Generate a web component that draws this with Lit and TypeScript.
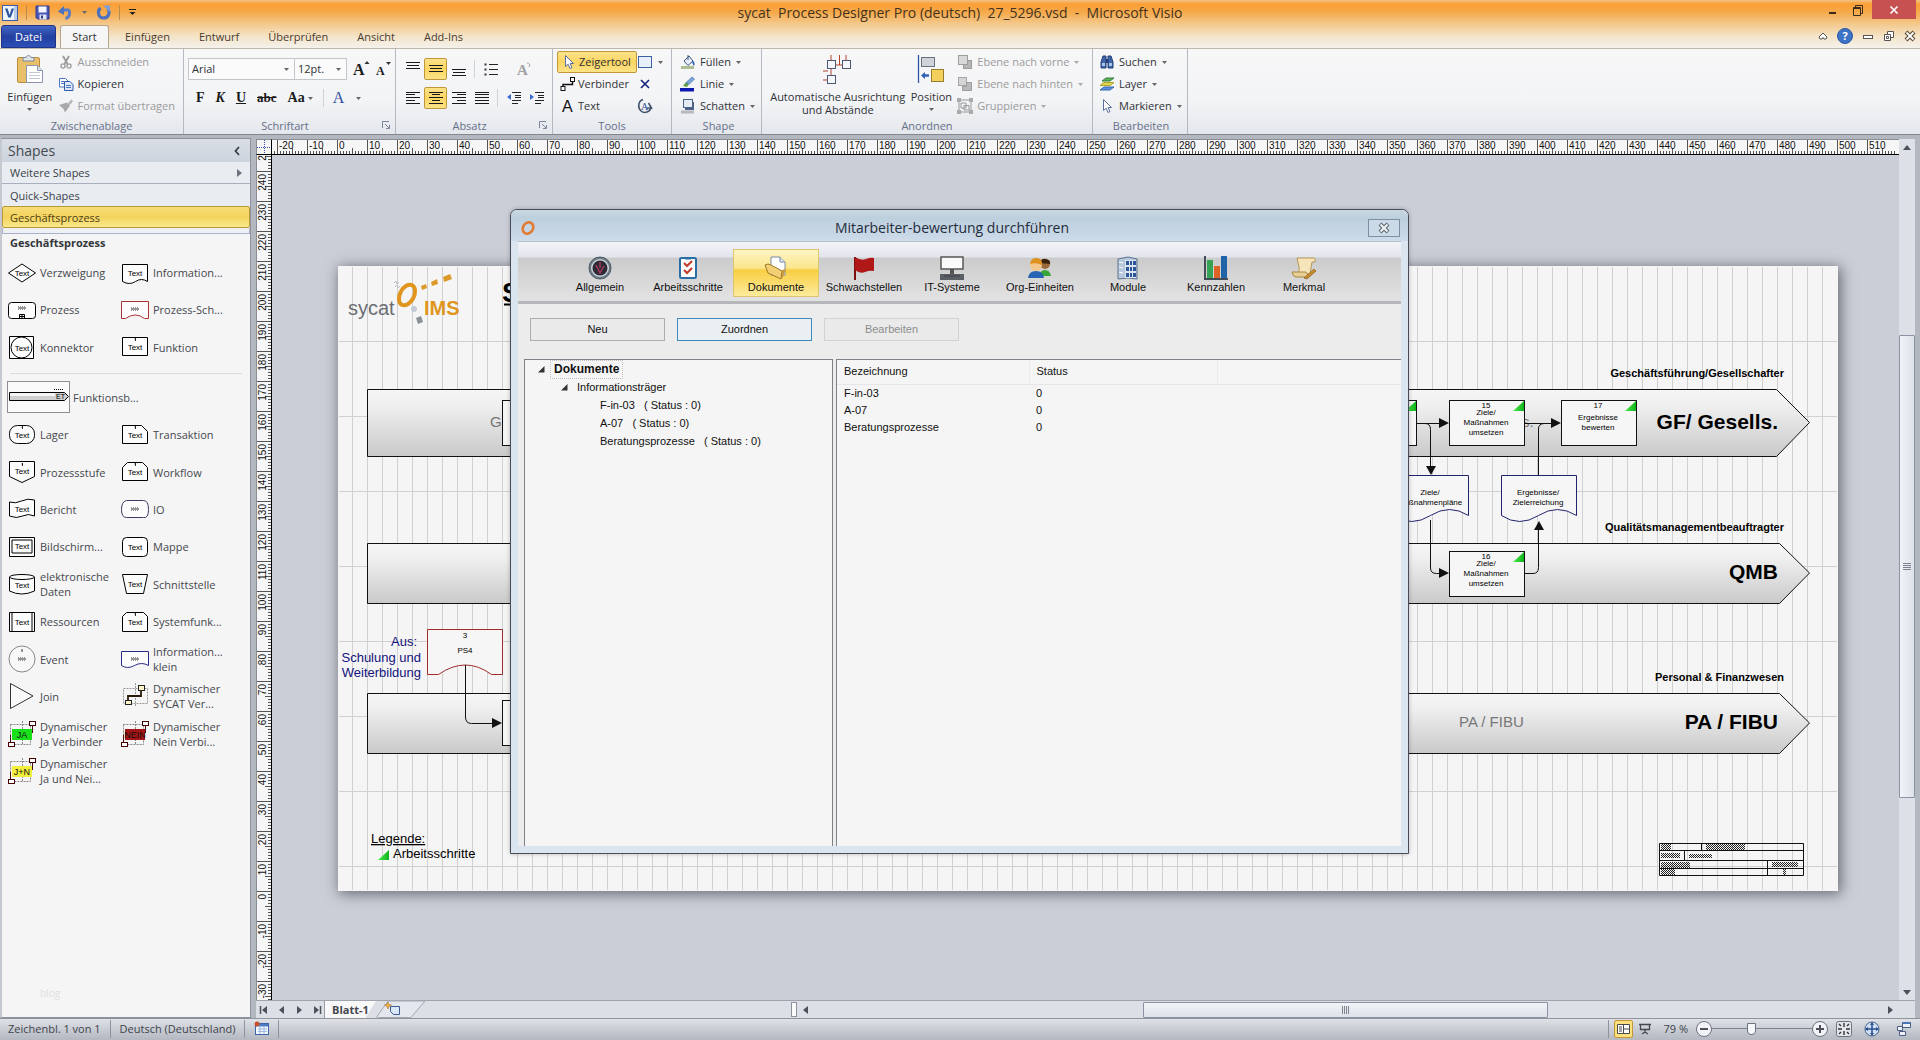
import { LitElement, html, svg, css } from "lit";
import type { TemplateResult } from "lit";
import { customElement, property } from "lit/decorators.js";
import { classMap } from "lit/directives/class-map.js";

const icon = (w: number, h: number, body: unknown) =>
  html`<svg class="ic" width=${w} height=${h} viewBox="0 0 ${w} ${h}" aria-hidden="true">${body}</svg>`;

const caret = html`<svg class="ic caret" width="7" height="5" viewBox="0 0 7 5" aria-hidden="true"><path d="M1 1h5L3.5 4z" fill="currentColor" /></svg>`;

/* ---------- ribbon icons ---------- */

const lines = (y: number[], w: number[], align: "l" | "c" | "r") =>
  svg`<path stroke="#1a1a1a" stroke-width="1" d=${y
    .map((v, i) => {
      const x = align === "l" ? 1 : align === "r" ? 15 - w[i] : 8 - w[i] / 2;
      return `M${x} ${v + 0.5}h${w[i]}`;
    })
    .join("")} />`;

const I = {
  visio: icon(16, 16, svg`<rect x=".5" y=".5" width="15" height="15" fill="#eef3fb" stroke="#3a5fa8"/><path d="M12 1h3v14h-3z" fill="#b9cbe8"/><path d="M3 3.500h2.600l2 6.500 2-6.500h2.400L8.800 12.500H6.300z" fill="#2a56a0"/>`),
  save: icon(15, 15, svg`<path d="M1 1h13v13H2.500L1 12.500z" fill="#4a56b8" stroke="#2f3b8f"/><rect x="3.500" y="1.500" width="8" height="6" fill="#f4f6ff"/><rect x="4.500" y="9.500" width="7" height="5" fill="#dfe4f6"/><rect x="6" y="10.500" width="2" height="3" fill="#2f3b8f"/>`),
  undo: icon(15, 15, svg`<path d="M3 5h7c1 0 1.500 1 1.500 3 0 3-2 5-4 5.500" fill="none" stroke="#5a7cc8" stroke-width="3"/><path d="M0 6.500 6 1v9z" fill="#4d72c0"/>`),
  redo: icon(15, 15, svg`<path d="M4.500 3c-4 3.500-2 10 3 10s7-5 4.500-9" fill="none" stroke="#4a70c0" stroke-width="3"/><path d="M7 .5h7v6.500z" fill="#7d9edc"/>`),
  qat: icon(9, 9, svg`<path d="M1 1.500h7" stroke="#222"/><path d="M1.500 4h6L4.500 7z" fill="#222"/>`),
  paste: icon(28, 30, svg`<rect x="1.500" y="3.500" width="22" height="25" rx="1.500" fill="#e9c06a" stroke="#b98d3c"/><path d="M7 7V3.500h3C10 1 15 1 15 3.500h3V7z" fill="#dfe3ea" stroke="#7f8794"/><path d="M10.500 11.500h11l5 5v12h-16z" fill="#fff" stroke="#8b95a8"/><path d="M21.500 11.500v5h5" fill="#dce3ef" stroke="#8b95a8"/><path d="M13 18.500h11M13 21.500h11M13 24.500h11" stroke="#c3cad6"/>`),
  cut: icon(16, 16, svg`<path d="M5 2l4.500 8M11 2L6.500 10" stroke="#9a9a9a" stroke-width="1.800"/><circle cx="5" cy="12" r="2" fill="none" stroke="#a5a5a5" stroke-width="1.500"/><circle cx="11" cy="12" r="2" fill="none" stroke="#a5a5a5" stroke-width="1.500"/>`),
  copy: icon(16, 16, svg`<path d="M1.500 2.500h6l2.500 2.500v6h-8.500z" fill="#fff" stroke="#4a76bd"/><path d="M6.500 5.500h5.500l3 3v6h-8.500z" fill="#dce8fa" stroke="#2f5ca8"/><path d="M8 9.500h5M8 11.500h5M3 5.500h3M3 7.500h3" stroke="#4a76bd"/>`),
  brush: icon(16, 16, svg`<path d="M10 5l3.500-3.500 1.500 1.500-3 4z" fill="#b5b5b5"/><path d="M1 7l8-2.500 3 3L7 14.500 5.500 11z" fill="#a9a9a9"/>`),
  sized: (big: boolean) => icon(18, 18, svg`<text x="1" y="15" font-family="Liberation Serif, serif" font-weight="700" font-size=${big ? 16 : 12} fill="#1a1a1a">A</text><path d=${big ? "M12.500 4h5L15 1z" : "M11 2h5l-2.500 3z"} fill="#333"/>`),
  list: icon(16, 16, svg`<path d="M6 3.500h9M6 8.500h9M6 13.500h9" stroke="#222"/><path d="M1.500 2.500h2v2h-2zM1.500 7.500h2v2h-2zM1.500 12.500h2v2h-2z" fill="#333"/>`),
  rotA: icon(16, 16, svg`<text x="1" y="14" font-family="Liberation Serif, serif" font-weight="700" font-size="15" fill="#a2a2a2">A</text><path d="M11 2q4 0 2 4" stroke="#a2a2a2" fill="none"/>`),
  outdent: icon(16, 16, svg`<path d="M6 2.500h9M9 5.500h6M9 7.500h6M6 10.500h9M6 13.500h6" stroke="#222"/><path d="M5 4v6L1 7z" fill="#3a6bd0"/>`),
  indent: icon(16, 16, svg`<path d="M6 2.500h9M9 5.500h6M9 7.500h6M6 10.500h9M6 13.500h6" stroke="#222"/><path d="M1 4v6l4-3z" fill="#3a6bd0"/>`),
  pointer: icon(16, 16, svg`<path d="M4.500 1.500v11l2.600-2.300 1.900 4.300 2-1-1.900-4h3.400z" fill="#fff" stroke="#5a6ea0"/>`),
  rect: icon(16, 16, svg`<rect x="1.500" y="2.500" width="13" height="11" fill="#e8f0fb" stroke="#3f5fa5"/>`),
  conn: icon(16, 16, svg`<path d="M3 10V8.500h9.500V6" fill="none" stroke="#111" stroke-width="1.500"/><rect x="1" y="10.500" width="4" height="4" fill="#fff" stroke="#111"/><rect x="10.500" y="1.500" width="4" height="4" fill="#fff" stroke="#111"/>`),
  cross: icon(16, 16, svg`<path d="M4 4l8 8M12 4l-8 8" stroke="#15257c" stroke-width="1.700"/>`),
  textA: icon(16, 16, svg`<text x="2" y="14" font-family="Liberation Sans, sans-serif" font-size="16" fill="#111">A</text>`),
  circA: icon(16, 16, svg`<path d="M6 1.500C1 3 .5 10 4 13s9 1 10-3.500M11.500 5l3 5-4.500 0" fill="none" stroke="#44546e" stroke-width="1.600"/><text x="4" y="12" font-family="Liberation Serif, serif" font-size="10" fill="#2d4f98">A</text>`),
  fill: icon(16, 16, svg`<path d="M4 7l5-5 4 5-5 4.500z" fill="#e7eefa" stroke="#3d547f"/><path d="M8 1v5" stroke="#3d547f"/><path d="M12 6c3 2 3 4 2 6-1-1-2-3-2-6z" fill="#2f62b5"/><rect x="1" y="12" width="13" height="3" fill="#aebd94"/>`),
  line: icon(16, 16, svg`<path d="M3 10l3-4 3 2-2 3z" fill="#5f9e4a"/><path d="M6 6.500L12 1l2.500 2L9 8.500z" fill="#7ba7dc" stroke="#41669e" stroke-width=".6"/><rect x="0" y="12" width="14" height="3.500" fill="#0a18b0"/>`),
  shadow: icon(16, 16, svg`<rect x="5" y="4" width="9" height="8" fill="#4b6188"/><rect x="3.500" y="1.500" width="9" height="8" fill="#e6ecf6" stroke="#4b6188"/><rect x="1" y="12.500" width="13" height="3" fill="#b5b8bd"/>`),
  auto: icon(32, 32, svg`<path d="M9 1v6M17.500 1v10M12 11h8M24 1v6M1 17h5M1 26h5M9 15v7" stroke="#b5432a" fill="none"/><g fill="#f3f6fb" stroke="#4d5a72"><rect x="5.500" y="6.500" width="8" height="8"/><rect x="20.500" y="6.500" width="8" height="8"/><rect x="5.500" y="21.500" width="8" height="8"/></g>`),
  pos: icon(28, 30, svg`<path d="M1.500 1v28" stroke="#2f57a5" stroke-width="1.300"/><rect x="4.500" y="3.500" width="13" height="9" fill="#cfd3da" stroke="#6a7180"/><rect x="14.500" y="15.500" width="12" height="12" fill="#f3cf5b" stroke="#9a7d2b"/><path d="M4 21.500l4-3.500v2.200h4v2.600H8V25z" fill="#2f62b5"/>`),
  front: icon(16, 16, svg`<rect x="6.500" y="6.500" width="8" height="8" fill="#b6b6b6" stroke="#9d9d9d"/><rect x="1.500" y="1.500" width="9" height="9" fill="#d9d9d9" stroke="#9d9d9d"/>`),
  back: icon(16, 16, svg`<rect x="1.500" y="1.500" width="8" height="8" fill="#d5d5d5" stroke="#a5a5a5"/><path d="M5.500 10.500h4v-4h5v8h-9z" fill="#b9b9b9" stroke="#9d9d9d"/>`),
  group: icon(16, 16, svg`<path d="M2 2h12v12H2zM4 5h5v5H4zM7 7.500h5V12H7z" fill="none" stroke="#999"/><path d="M0 0h4v4H0zM12 0h4v4h-4zM0 12h4v4H0zM12 12h4v4h-4z" fill="#aaa"/>`),
  find: icon(16, 16, svg`<path d="M2 14V8l2-6h3v12zM9 14V2h3l2 6v6z" fill="#3f65a8" stroke="#243f78"/><path d="M7 5h2v4H7z" fill="#243f78"/><path d="M3 9h3v3H3zM10 9h3v3h-3z" fill="#a9c3ea"/>`),
  layer: icon(16, 16, svg`<path d="M1 14l4-3h10l-4 3z" fill="#5d8fd6" stroke="#386bb0"/><path d="M1 9.500l4-3h10l-4 3z" fill="#e2da4c" stroke="#b0a52c"/><path d="M3 5l4-3h8l-4 3z" fill="#5eb05a" stroke="#34803a"/>`),
  launcher: icon(9, 9, svg`<path d="M.5 7V.5H7" fill="none" stroke="#7a869b"/><path d="M3 3l4 4M7.500 4v3.500H4" fill="none" stroke="#7a869b"/>`),
};

const vAlign = { top: lines([1, 4, 7], [14, 12, 14], "c"), mid: lines([4, 7, 10], [14, 12, 14], "c"), bot: lines([8, 11, 14], [14, 12, 14], "c") };
const hAlign = {
  l: lines([2, 4, 7, 10, 13], [14, 9, 14, 9, 14], "l"),
  c: lines([2, 4, 7, 10, 13], [14, 8, 14, 8, 14], "c"),
  r: lines([2, 4, 7, 10, 13], [14, 9, 14, 9, 14], "r"),
  j: lines([2, 4, 7, 10, 13], [14, 14, 14, 14, 14], "l"),
};

/* ---------- stencil shapes ---------- */

const T = (y = 15, n = false) =>
  svg`<text x="14" y=${y} text-anchor="middle" font-family="Liberation Sans, sans-serif" font-size="8" fill="#000">Text</text>${n ? svg`<path d="M14.500 4v3M13.500 5h1" stroke="#000" stroke-width=".8"/>` : ""}`;
const dots = (y = 12) => svg`<path d="M10 ${y}h8M11 ${y + 1}h7M10 ${y + 2}h8" stroke="#333" stroke-dasharray="1 1"/>`;
const box = (d: string, c = "#000") => svg`<path d=${d} fill="#fdfdfd" stroke=${c}/>`;
const dyn = (fill: string, label: string) =>
  svg`<path d="M2.500 3.500h20v20h-20zM14.500 0v24" fill="none" stroke="#888" stroke-dasharray="2 1"/><rect x="4" y="8" width="20" height="11" fill=${fill}/><path d="M2.500 22v-8M24.500 4v8" stroke="#4a1010"/><rect x=".5" y="21.500" width="6" height="4" fill="#fff" stroke="#400"/><rect x="21.500" y=".5" width="6" height="4" fill="#fff" stroke="#400"/><text x="14" y="17" text-anchor="middle" font-family="Liberation Sans, sans-serif" font-size="9" fill="#111">${label}</text>`;

type Stencil = [string, unknown];
const groupA: Stencil[] = [
  ["Verzweigung", svg`${box("M.5 13L14 4l13.500 9L14 22z")}${T(16)}`],
  ["Information...", svg`${box("M1.500 4.500h25v17q-6-4-12 0t-13 0z")}${T(16)}`],
  ["Prozess", svg`<rect x=".5" y="5.500" width="27" height="16" rx="3" fill="#fdfdfd" stroke="#000"/>${dots(10)}<path d="M11.500 17.500h5v4h-5zM14 17v4M11 19.500h5" stroke="#000" fill="none"/>`],
  ["Prozess-Sch...", svg`${box("M.5 4.500h27v17h-4q-9-7-19 0h-4z", "#a33")}${dots(11)}`],
  ["Konnektor", svg`${box("M1.500 2.500h24v22h-24z")}<circle cx="13.500" cy="13.500" r="10.500" fill="none" stroke="#000"/>${T(17)}`],
  ["Funktion", svg`${box("M1.500 3.500h25v18h-25z")}${T(16, true)}`],
];
const groupB: Stencil[] = [
  ["Lager", svg`<rect x="1.500" y="3.500" width="25" height="18" rx="8" fill="#fdfdfd" stroke="#000"/>${T(16, true)}`],
  ["Transaktion", svg`${box("M1.500 3.500h19l6 6v12h-25z")}${T(16, true)}`],
  ["Prozessstufe", svg`${box("M1.500 2.500h25v15l-12.500 6-12.500-6z")}${T(15, true)}`],
  ["Workflow", svg`${box("M1.500 21.500v-13l5-5h15l5 5v13z")}${T(16, true)}`],
  ["Bericht", svg`${box("M1.500 6q6 2 12-1t13-1v16q-6-3-12 0t-13 0z")}${T(16)}`],
  ["IO", svg`${box("M5.500 4.500h17q5 0 5 9t-5 8h-17q-5 0-5-8t5-9z", "#3c3c66")}${dots(12)}`],
  ["Bildschirm...", svg`${box("M1.500 3.500h25v19h-25zM4 6h20v13H4z")}${T(15)}`],
  ["Mappe", svg`<rect x="1.500" y="3.500" width="25" height="19" rx="4" fill="#fdfdfd" stroke="#000"/>${T(16)}`],
  ["elektronische Daten", svg`${box("M1.500 6v14q12 6 25 0V6")}<ellipse cx="14" cy="6" rx="12.500" ry="2.500" fill="#fdfdfd" stroke="#000"/>${T(17)}`],
  ["Schnittstelle", svg`${box("M1.500 3.500h25l-4 19h-17z")}${T(16)}`],
  ["Ressourcen", svg`${box("M1.500 3.500h25v19h-25zM4 3v19M24 3v19")}${T(16)}`],
  ["Systemfunk...", svg`${box("M1.500 22.500v-15l4-4h17l4 4v15z")}${T(16, true)}`],
  ["Event", svg`<circle cx="14" cy="13" r="13" fill="#f8f8f8" stroke="#888"/><path d="M14 3v3" stroke="#333"/>${dots(12)}`],
  ["Information... klein", svg`${box("M.5 5.500h27v14q-7-4-14 0t-13 0z", "#2a2a88")}${dots(12)}`],
  ["Join", svg`<path d="M2.500.5v25L25 13z" fill="#fafafa" stroke="#333"/>`],
  ["Dynamischer SYCAT Ver...", svg`<path d="M2.500 5.500h24v15h-24zM14.500 0v24" fill="none" stroke="#999" stroke-dasharray="2 1"/><path d="M7 18v-5h13V7" fill="none" stroke="#2c1a08" stroke-width="1.800"/><rect x="4.500" y="17.500" width="6" height="4" fill="#fff3c9" stroke="#222"/><rect x="17.500" y="2.500" width="6" height="5" fill="#fff3c9" stroke="#222"/>`],
  ["Dynamischer Ja Verbinder", dyn("#1ae01a", "JA")],
  ["Dynamischer Nein Verbi...", dyn("#a31515", "NEIN")],
  ["Dynamischer Ja und Nei...", dyn("#f2ee3c", "J+N")],
];

/* ---------- diagram ---------- */

const band = (top: number, bottom: number, shoulder: number) =>
  svg`<path d="M367.500 ${top}.500H${shoulder}.500L1809.500 ${(top + bottom) / 2}L${shoulder}.500 ${bottom}.500H367.500Z" fill="url(#bandFill)" stroke="#111"/>`;
const laneTitle = (y: number, t: string) => svg`<text x="1784" y=${y} text-anchor="end" font-size="11" font-weight="700">${t}</text>`;
const laneName = (y: number, t: string) => svg`<text x="1778" y=${y} text-anchor="end" font-size="21" font-weight="700">${t}</text>`;
const flag = (x: number, y: number) => svg`<path d="M${x} ${y + 10}h11v-10z" fill="url(#flagFill)"/>`;
const step = (x: number, y: number, rows: [number, string][]) => svg`
  <rect x=${x + 0.5} y=${y + 0.5} width="75" height="45" fill="#f6f6f6" stroke="#111"/>
  ${flag(x + 64, y + 1)}
  ${rows.map(([dy, t]) => svg`<text x=${x + 37} y=${y + dy} text-anchor="middle" font-size="8">${t}</text>`)}`;
const docShape = (x: number, a: string, b: string) => svg`
  <path d="M${x}.500 475.500h75v40q-19-12-38 0t-37 0z" fill="#f6f6f6" stroke="#24246e"/>
  <text x=${x + 37} y="495" text-anchor="middle" font-size="8">${a}</text>
  <text x=${x + 37} y="505" text-anchor="middle" font-size="8">${b}</text>`;
const heads = (list: [number, number, "r" | "d" | "u"][]) =>
  list.map(([x, y, d]) => svg`<path d=${d === "r" ? `M${x} ${y}l-10-5v10z` : d === "d" ? `M${x} ${y}l-5-9h10z` : `M${x} ${y}l-5 9h10z`} fill="#111"/>`);

const drawing = svg`
  <defs>
    <linearGradient id="bandFill" x1="0" y1="0" x2="0" y2="1"><stop offset="0" stop-color="#f6f6f6"/><stop offset=".25" stop-color="#efefef"/><stop offset="1" stop-color="#c9c9c9"/></linearGradient>
    <linearGradient id="flagFill" x1="0" y1="0" x2="1" y2="0"><stop offset="0" stop-color="#4bea4b"/><stop offset="1" stop-color="#12b41c"/></linearGradient>
    <pattern id="half" width="2" height="2" patternUnits="userSpaceOnUse"><rect width="1" height="1" fill="#222"/><rect x="1" y="1" width="1" height="1" fill="#222"/></pattern>
    <pattern id="grid" x="337" y="266" width="15" height="75" patternUnits="userSpaceOnUse"><path d="M.5 0v75M0 75.500h15M0 .5h15" stroke="#d0d0d0" fill="none"/></pattern>
  </defs>
  <rect x="338" y="266" width="1500" height="625" fill="#f5f5f5"/>
  <rect x="339" y="267" width="1498" height="623" fill="url(#grid)"/>
  <g>
    <text x="348" y="315" font-size="20" fill="#6c6e74">sycat</text>
    <text x="424" y="315" font-size="20" font-weight="700" fill="#e0951f">IMS</text>
    <ellipse cx="407" cy="295" rx="7" ry="11" transform="rotate(28 407 295)" fill="none" stroke="#e0951f" stroke-width="4"/>
    <path d="M421 286l5-2 1 4-5 2zM431 282l6-3 1 5-6 2zM443 277l7-3 2 5-8 3z" fill="#dd9a2a"/>
    <circle cx="414" cy="309" r="3" fill="#c3cbd8"/><path d="M416 318l5-2 2 6-5 2z" fill="#8b8f96"/>
    <path d="M394 283l2-2 1 3 2-2M395 287l2-2 1 3 2-2" fill="none" stroke="#b8bcc4"/>
  </g>
  <text x="502" y="302" font-size="27" font-weight="700">S</text><path d="M504 304.500h20" stroke="#000" stroke-width="2"/>
  ${band(389, 456, 1776)}${band(543, 603, 1779)}${band(693, 753, 1779)}
  ${laneTitle(377, "Geschäftsführung/Gesellschafter")}${laneTitle(531, "Qualitätsmanagementbeauftragter")}${laneTitle(681, "Personal & Finanzwesen")}
  ${laneName(429, "GF/ Gesells.")}${laneName(579, "QMB")}${laneName(729, "PA / FIBU")}
  <g font-size="15" fill="#777"><text x="490" y="427">G</text><text x="1522" y="427">s.</text><text x="1459" y="727">PA / FIBU</text></g>
  <g fill="none" stroke="#111">
    <path d="M1417 423.500h24M1425 423.500q5.500 0 5.500 6V467M1430.500 520v48q0 5.500 6 5.500h4M1525 573.500h8q5.500 0 5.500-6V529M1538.500 475v-46q0-5.500 6-5.500M1524 423.500h30M465.500 665v52q0 6.500 6 6.500h22"/>
  </g>
  ${step(1341, 400, [[20, ""]])}
  ${step(1449, 400, [[8, "15"], [15, "Ziele/"], [25, "Maßnahmen"], [35, "umsetzen"]])}
  ${step(1561, 400, [[8, "17"], [20, "Ergebnisse"], [30, "bewerten"]])}
  ${step(1449, 551, [[8, "16"], [15, "Ziele/"], [25, "Maßnahmen"], [35, "umsetzen"]])}
  ${docShape(1393, "Ziele/", "Maßnahmenpläne")}${docShape(1501, "Ergebnisse/", "Zielerreichung")}
  <rect x="502.500" y="400.500" width="75" height="45" fill="#f6f6f6" stroke="#111"/>
  <rect x="502.500" y="700.500" width="75" height="45" fill="#f6f6f6" stroke="#111"/>
  <path d="M427.500 629.500h75v45h-11q-26-19-53 0h-11z" fill="#f6f6f6" stroke="#a02c2c"/>
  <path d="M465.500 665v10" stroke="#111"/>
  <text x="465" y="638" text-anchor="middle" font-size="8">3</text><text x="465" y="653" text-anchor="middle" font-size="8">PS4</text>
  ${heads([[1449, 423, "r"], [1561, 423, "r"], [1449, 573, "r"], [502, 723, "r"], [1431, 475, "d"], [1539, 521, "u"]])}
  <g font-size="13" fill="#12127c" text-anchor="end"><text x="417" y="646">Aus:</text><text x="421" y="662">Schulung und</text><text x="421" y="677">Weiterbildung</text></g>
  <g font-size="13"><text x="371" y="843" text-decoration="underline">Legende:</text><text x="393" y="858">Arbeitsschritte</text></g>
  ${flag(378, 850)}
  <path d="M1659.500 843.500h144v32h-144zM1659 850.500h145M1659 860.500h145M1659 868.500h145M1701.500 844v6M1684.500 851v9M1767.500 861v15" fill="none" stroke="#111"/>
  <path d="M1661 844h10v6h-10zM1706 844h39v6h-39zM1661 853h19v5h-19zM1689 854h23v4h-23zM1661 862h29v6h-29zM1772 862h26v5h-26zM1661 869h14v6h-14zM1783 869h3v6h-3z" fill="url(#half)"/>`;

/* ---------- dialog icons ---------- */

const D: Record<string, unknown> = {
  Allgemein: svg`<circle cx="12" cy="12" r="11" fill="#6f7b87" stroke="#4e5864"/><circle cx="12" cy="12" r="9" fill="#c9d1d8"/><circle cx="12" cy="12" r="7.500" fill="#2b2a35"/><path d="M12 6v6M8 9l4 8 4-7" stroke="#a93d5a" fill="none" stroke-width="1.500"/>`,
  Arbeitsschritte: svg`<rect x="4" y="2" width="16" height="20" rx="1.500" fill="#fbfbfb" stroke="#2a6ea8" stroke-width="2"/><path d="M9 1h6v2.500H9z" fill="#2a6ea8"/><path d="M8 7l3 3 5-5M8 14l3 3 5-5" fill="none" stroke="#c03a2a" stroke-width="2"/>`,
  Dokumente: svg`<path d="M7 1h9l5 5v13H7z" fill="#fff" stroke="#7a8aa5"/><path d="M16 1v5h5" fill="#dbe4f2" stroke="#7a8aa5"/><path d="M1 9l3-1 3 1 11 6-1 8L4 17z" fill="#f3cf73" stroke="#9c7a2b"/><path d="M18 23l4-10-4 1z" fill="#c89a3c"/>`,
  Schwachstellen: svg`<path d="M3 1v23" stroke="#7c1010" stroke-width="2"/><path d="M3 1q6 4 11 2t8-1v13q-4-1-9 1T3 14z" fill="#b01717"/>`,
  "IT-Systeme": svg`<rect x="1" y="1" width="22" height="12" fill="#fafafa" stroke="#555" stroke-width="1.500"/><path d="M10 13h4v5h-4z" fill="#555"/><path d="M0 18h24v6H0z" fill="#5c6066"/><path d="M4 20h16" stroke="#3a3d42"/>`,
  "Org-Einheiten": svg`<circle cx="17" cy="8" r="5" fill="#9a6a3a"/><path d="M12 7q1-5 6-4t4 5z" fill="#3a2310"/><path d="M11 20q1-6 6-6t6 6z" fill="#37a53a"/><circle cx="8" cy="9" r="6" fill="#f3c68c"/><path d="M2 8q1-7 7-6t5 7q-6-3-12-1z" fill="#dd9222"/><path d="M0 22q1-7 8-7t8 7z" fill="#2864b4"/>`,
  Module: svg`<path d="M2 3l10-2 9 2v20l-9-1-10 1z" fill="#b8c8dc" stroke="#5c7390"/><path d="M9 4h11v18H9z" fill="#dbe5f2"/><g fill="#2e5597"><path d="M10 5h3v4h-3zM14 5h2v4h-2zM17 5h3v4h-3zM10 11h3v4h-3zM14 11h2v4h-2zM17 11h3v4h-3zM10 17h3v4h-3zM14 17h2v4h-2zM17 17h3v4h-3z"/></g><path d="M3 6l4 1M3 11l4 1M3 16l4 1" stroke="#fff"/>`,
  Kennzahlen: svg`<path d="M1 0v23h23" fill="none" stroke="#444c55" stroke-width="2"/><rect x="3" y="4" width="6" height="18" fill="#35a353"/><rect x="10" y="10" width="6" height="12" fill="#dd6327"/><rect x="17" y="0" width="6" height="22" fill="#2263a8"/>`,
  Merkmal: svg`<path d="M5 2h17q2 0 1 4h-3l-2 12H4q4-1 3-7z" fill="#f6e5bb" stroke="#b59656"/><path d="M0 16h14l3 5H4q-3 0-4-5z" fill="#e8cf93" stroke="#a88645"/><path d="M12 22l10-9 2 2-9 8z" fill="#c98b2e" stroke="#7c5318" stroke-width=".6"/>`,
};

/* ---------- rulers ---------- */

function tickPath(from: number, to: number, at: (v: number) => number, horizontal: boolean) {
  let d = "";
  for (let v = from; v <= to; v++) {
    const start = v % 10 === 0 ? 0 : v % 5 === 0 ? 8 : 11;
    const p = at(v) + 0.5;
    d += horizontal ? `M${p} ${start}V15` : `M${start} ${p}H15`;
  }
  return d;
}
const tens = (from: number, to: number) => Array.from({ length: (to - from) / 10 + 1 }, (_, i) => from + i * 10);

@customElement("ruler-strip")
class RulerStrip extends LitElement {
  @property({ type: Boolean }) vertical = false;
  static styles = css`
    :host { display: block; overflow: hidden; background: #f6f6f6; min-width: 0; min-height: 0; }
    :host([vertical]) { border-right: 1px solid #000; border-left: 1px solid #8a8d96; contain: size; }
    :host(:not([vertical])) { border-bottom: 1px solid #000; border-top: 1px solid #8a8d96; contain: size; }
    svg { display: block; width: 100%; height: 100%; }
    text { font: 10px "Liberation Sans", Arial, sans-serif; fill: #111; }
  `;
  render() {
    return this.vertical
      ? html`<svg aria-hidden="true"><path d=${tickPath(-40, 255, (v) => 736 - 3 * v, false)} stroke="#555" />
          ${tens(-30, 250).map((v) => svg`<text transform="translate(9 ${739 - 3 * v}) rotate(-90)" text-anchor="end">${v}</text>`)}</svg>`
      : html`<svg aria-hidden="true"><path d=${tickPath(-21, 519, (v) => 65 + 3 * v, true)} stroke="#555" />
          ${tens(-20, 510).map((v) => svg`<text x=${67 + 3 * v} y="9">${v}</text>`)}</svg>`;
  }
}

const uiBase = css`
  * { box-sizing: border-box; }
  button, select, input { font: inherit; color: inherit; margin: 0; }
  button { border: 0; background: none; padding: 0; display: inline-flex; align-items: center; white-space: nowrap; }
  .ic { display: block; flex: none; overflow: visible; }
`;

@customElement("office-ribbon")
class OfficeRibbon extends LitElement {
  static styles = [uiBase, css`
    :host { display: block; font: 11px/16px "Open Sans", "Noto Sans", sans-serif; color: #2f3237; }
    .top { background: linear-gradient(#f3c489 0, #fb9f36 4px, #f6a94a 12px, #f3c98c 24px, #f4e3c6 36px, #f4f2ec 48px); }
    .title { display: grid; grid-template-columns: 1fr auto 1fr; height: 25px; align-items: center; }
    .qat { display: flex; align-items: center; gap: 8px; padding: 0 2px; color: #222; }
    .qat .bar { width: 1px; height: 15px; background: #b98c50; }
    .title h1 { margin: 0; font: 14px/25px "Open Sans", "Noto Sans", sans-serif; white-space: pre; color: #43321f; }
    .win { display: flex; justify-content: flex-end; align-items: flex-start; align-self: start; padding-right: 4px; }
    .win button { height: 19px; width: 25px; justify-content: center; }
    .win .close { width: 44px; margin-left: 2px; background: #c75050; }
    .tabs { display: flex; height: 23px; align-items: flex-end; padding-left: 1px; color: #4a3c30; }
    .tab { height: 22px; padding: 0 14px; margin-right: 1px; justify-content: center; }
    .tabs .file { width: 55px; justify-content: center; margin-right: 4px; height: 23px; color: #fff; background: linear-gradient(#4166c6, #2440a0 50%, #2b4fb8); border: 1px solid #1f3488; border-radius: 3px 3px 0 0; }
    .tabs .on { width: 49px; justify-content: center; margin-right: 2px; height: 23px; background: #f6f6f6; border: 1px solid #b5a58c; border-bottom: 0; border-radius: 3px 3px 0 0; color: #333; }
    .mdi { margin-left: auto; display: flex; align-items: center; gap: 9px; padding: 0 4px 4px 0; }
    .body { display: flex; height: 87px; background: linear-gradient(#f7f7f8, #f3f4f6 60%, #e4e7ec); border-top: 1px solid #bdb7ab; border-bottom: 1px solid #84878e; }
    .group { display: flex; flex-direction: column; border-right: 1px solid #b5bac2; padding: 2px 4px 0; flex: none; }
    .rows { display: flex; height: 66px; }
    .col { display: flex; flex-direction: column; }
    .cap { display: flex; align-items: center; justify-content: center; height: 17px; color: #66708a; }
    .cap span { flex: 1; text-align: center; }
    .col button { height: 22px; gap: 4px; padding-right: 4px; }
    .dim { color: #9b9b9b; }
    .big { flex-direction: column; justify-content: flex-start; line-height: 13px; white-space: normal; }
    .big .ic:first-child { margin: 3px 0 6px; }
    .big .caret { margin-top: 4px; }
    .bauto .ic:first-child { margin: 3px 0 4px; }
    .caret { color: #666; }
    .dim .caret { color: #aaa; }
    .g1 { width: 184px; } .g2 { width: 212px; } .g3 { width: 157px; } .g4 { width: 119px; } .g5 { width: 90px; padding-left: 8px; } .g6 { width: 331px; } .g7 { width: 95px; padding-left: 6px; }
    .bp { width: 52px; margin-right: 2px; } .bauto { width: 144px; } .bpos { width: 44px; margin-right: 4px; }
    .line { display: flex; align-items: center; height: 22px; gap: 5px; }
    .g2 .stack, .g3 .stack { display: flex; flex-direction: column; padding-top: 7px; gap: 7px; }
    .combo { display: grid; align-items: center; border: 1px solid #c3c6cb; background: #fbfbfb; height: 22px; margin-right: -6px; }
    .combo select { grid-area: 1 / 1; appearance: none; border: 0; background: none; height: 20px; padding: 0 3px; width: 100%; }
    .combo .caret { grid-area: 1 / 1; justify-self: end; margin-right: 4px; pointer-events: none; }
    .font { width: 107px; } .size { width: 53px; margin-right: 0; }
    .serif { font: 700 14px/20px "Liberation Serif", serif; color: #1a1a1a; }
    .sm { font-size: 13px; }
    .i { font-style: italic; } .u { text-decoration: underline; } .s { text-decoration: line-through; }
    .blue { color: #2e4f9d; font-weight: 400; font-size: 16px; }
    .chars { gap: 11px; padding-left: 8px; } .chars .serif { height: 22px; gap: 2px; }
    .vbar { width: 1px; height: 18px; background: #cfd2d7; }
    .chars .vbar { margin: 0 -2px; }
    .sq { width: 23px; height: 22px; justify-content: center; border: 1px solid transparent; border-radius: 2px; }
    .sq.on, .pt { background: linear-gradient(#fbe28a, #fbd561 50%, #fce488); border: 1px solid #c2973a; border-radius: 2px; }
    .aligns { gap: 0; padding-left: 1px; } .aligns .vbar { margin: 0 4px; } .aligns .gap { width: 10px; }
    .col .pt { width: 80px; padding-left: 3px; gap: 2px; }
    .g4 .a { width: 83px; } .g4 .a button { padding-left: 3px; gap: 2px; }
  `];
  private small(ic: unknown, label: string, opts: { dim?: boolean; dd?: boolean; cls?: string } = {}) {
    return html`<button class=${classMap({ dim: !!opts.dim, [opts.cls ?? "plain"]: true })} ?disabled=${!!opts.dim}>${ic}${label}${opts.dd ? caret : ""}</button>`;
  }
  private cap(label: string, launch = false) {
    return html`<div class="cap"><span>${label}</span>${launch ? html`<button aria-label=${label + " Optionen"}>${I.launcher}</button>` : ""}</div>`;
  }
  private sq(body: TemplateResult | unknown, label: string, on = false) {
    return html`<button class=${classMap({ sq: true, on })} aria-label=${label}>${body}</button>`;
  }
  render() {
    return html`
      <header class="top">
        <div class="title">
          <div class="qat">${I.visio}<span class="bar"></span>
            <button aria-label="Speichern">${I.save}</button><button aria-label="Rückgängig">${I.undo}</button>${caret}
            <button aria-label="Wiederholen">${I.redo}</button><span class="bar"></span><button aria-label="Anpassen">${I.qat}</button></div>
          <h1>sycat  Process Designer Pro (deutsch)  27_5296.vsd  -  Microsoft Visio</h1>
          <div class="win">
            <button aria-label="Minimieren">${icon(10, 10, svg`<path d="M1 8h7" stroke="#3a2c1c" stroke-width="2"/>`)}</button>
            <button aria-label="Wiederherstellen">${icon(12, 12, svg`<path d="M3.500 3V1.500h7v8H9M1.500 3.500h7v8h-7zM1 4.500h8" fill="none" stroke="#3a2c1c"/>`)}</button>
            <button class="close" aria-label="Schließen">${icon(10, 10, svg`<path d="M1.500 1.500l7 7M8.500 1.500l-7 7" stroke="#fff" stroke-width="1.700"/>`)}</button>
          </div>
        </div>
        <nav class="tabs">
          <button class="file">Datei</button><button class="on">Start</button>
          ${["Einfügen", "Entwurf", "Überprüfen", "Ansicht", "Add-Ins"].map((t) => html`<button class="tab">${t}</button>`)}
          <div class="mdi">
            <button aria-label="Menüband minimieren">${icon(10, 8, svg`<path d="M1 5l4-4 4 4-1 2H6L5 5.500 4 7H2z" fill="#fff" stroke="#555"/>`)}</button>
            <button aria-label="Hilfe">${icon(16, 16, svg`<circle cx="8" cy="8" r="7.500" fill="#3d73c6" stroke="#2a58a4"/><text x="8" y="12" text-anchor="middle" font-size="11" font-weight="700" fill="#fff">?</text>`)}</button>
            <button aria-label="Fenster minimieren">${icon(12, 8, svg`<rect x="1.500" y="3.500" width="9" height="3" fill="#fff" stroke="#555"/>`)}</button>
            <button aria-label="Fenster wiederherstellen">${icon(12, 12, svg`<path d="M4.500 4V1.500h6v6H8M1.500 4.500h6v6h-6zM3.500 6.500h2v2h-2z" fill="#fff" stroke="#555"/>`)}</button>
            <button aria-label="Fenster schließen">${icon(12, 12, svg`<path d="M2 2l8 8M10 2l-8 8" stroke="#5a4a35" stroke-width="4"/><path d="M2.500 2.500l7 7M9.500 2.500l-7 7" stroke="#fff" stroke-width="1.800"/>`)}</button>
          </div>
        </nav>
      </header>
      <div class="body">
        <section class="group g1"><div class="rows">
          <button class="big bp">${I.paste}Einfügen${caret}</button>
          <div class="col">${this.small(I.cut, "Ausschneiden", { dim: true })}${this.small(I.copy, "Kopieren")}${this.small(I.brush, "Format übertragen", { dim: true })}</div>
        </div>${this.cap("Zwischenablage")}</section>
        <section class="group g2"><div class="rows"><div class="stack">
          <div class="line">
            <label class="combo font"><select aria-label="Schriftart"><option>Arial</option></select>${caret}</label>
            <label class="combo size"><select aria-label="Schriftgrad"><option>12pt.</option></select>${caret}</label>
            <button aria-label="Schrift vergrößern">${I.sized(true)}</button><button aria-label="Schrift verkleinern">${I.sized(false)}</button>
          </div>
          <div class="line chars">
            <button class="serif">F</button><button class="serif i">K</button><button class="serif u">U</button><button class="serif sm s">abc</button>
            <button class="serif">Aa${caret}</button><span class="vbar"></span><button class="serif blue">A</button>${caret}
          </div>
        </div></div>${this.cap("Schriftart", true)}</section>
        <section class="group g3"><div class="rows"><div class="stack">
          <div class="line aligns">${this.sq(icon(16, 16, vAlign.top), "Oben")}${this.sq(icon(16, 16, vAlign.mid), "Mitte", true)}${this.sq(icon(16, 16, vAlign.bot), "Unten")}<span class="vbar"></span>${this.sq(I.list, "Aufzählung")}<span class="gap"></span>${this.sq(I.rotA, "Drehen")}</div>
          <div class="line aligns">${this.sq(icon(16, 16, hAlign.l), "Links")}${this.sq(icon(16, 16, hAlign.c), "Zentriert", true)}${this.sq(icon(16, 16, hAlign.r), "Rechts")}${this.sq(icon(16, 16, hAlign.j), "Block")}<span class="vbar"></span>${this.sq(I.outdent, "Ausrücken")}${this.sq(I.indent, "Einrücken")}</div>
        </div></div>${this.cap("Absatz", true)}</section>
        <section class="group g4"><div class="rows">
          <div class="col a">${this.small(I.pointer, "Zeigertool", { cls: "pt" })}${this.small(I.conn, "Verbinder")}${this.small(I.textA, "Text")}</div>
          <div class="col"><button aria-label="Rechteck">${I.rect}${caret}</button><button aria-label="Verbindungspunkt">${I.cross}</button><button aria-label="Textblock">${I.circA}</button></div>
        </div>${this.cap("Tools")}</section>
        <section class="group g5"><div class="rows"><div class="col">${this.small(I.fill, "Füllen", { dd: true })}${this.small(I.line, "Linie", { dd: true })}${this.small(I.shadow, "Schatten", { dd: true })}</div></div>${this.cap("Shape")}</section>
        <section class="group g6"><div class="rows">
          <button class="big bauto">${I.auto}Automatische Ausrichtung und Abstände</button>
          <button class="big bpos">${I.pos}Position${caret}</button>
          <div class="col">${this.small(I.front, "Ebene nach vorne", { dim: true, dd: true })}${this.small(I.back, "Ebene nach hinten", { dim: true, dd: true })}${this.small(I.group, "Gruppieren", { dim: true, dd: true })}</div>
        </div>${this.cap("Anordnen")}</section>
        <section class="group g7"><div class="rows"><div class="col">${this.small(I.find, "Suchen", { dd: true })}${this.small(I.layer, "Layer", { dd: true })}${this.small(I.pointer, "Markieren", { dd: true })}</div></div>${this.cap("Bearbeiten")}</section>
      </div>`;
  }
}

@customElement("shapes-panel")
class ShapesPanel extends LitElement {
  static styles = [uiBase, css`
    :host { display: flex; flex-direction: column; font: 11px/15px "Open Sans", "Noto Sans", sans-serif; color: #45484e; background: #f5f5f5; border: 1px solid #8f929a; border-left: 2px solid #c6c9d0; }
    h2 { margin: 0; display: flex; justify-content: space-between; align-items: center; height: 23px; padding: 0 10px 0 6px; font-size: 14px; font-weight: 400; background: linear-gradient(#d9dee6, #cdd4de); }
    .row { display: flex; justify-content: space-between; width: 100%; height: 22px; padding: 0 8px; background: #e9edf2; color: #3a3f48; }
    .more { border-bottom: 1px solid #a9b0bd; }
    .sel { border: 1px solid #b99638; border-radius: 2px; background: linear-gradient(#f7dd77, #f4d35e 50%, #fae98c); padding: 0 7px; color: #4c4014; }
    .band { height: 6px; border: 1px solid #a9b0cf; border-top: 0; background: #eef0f4; }
    h3 { margin: 0; padding: 0 8px; font-size: 11px; line-height: 17px; color: #33363b; }
    .set { display: grid; grid-template-columns: 113px 1fr; grid-auto-rows: 1fr; padding-left: 6px; }
    .first { min-height: 112px; margin-top: 3px; } .rest { min-height: 374px; }
    .item { display: grid; grid-template-columns: 28px 1fr; gap: 4px; align-items: center; text-align: left; white-space: normal; }
    .item span { max-width: 74px; }
    hr { margin: 7px 8px; border: 0; border-top: 1px solid #dadce0; height: 0; width: 232px; }
    .wide { margin-left: 5px; gap: 3px; height: 32px; align-self: flex-start; margin-bottom: 3px; }
    .mark { margin-top: auto; padding: 0 0 16px 38px; color: #dfdfdf; font-size: 10px; }
  `];
  private item([label, body]: Stencil) {
    return html`<button class="item">${icon(28, 26, body)}<span>${label}</span></button>`;
  }
  render() {
    return html`
      <h2>Shapes<button aria-label="Fenster Shapes minimieren">${icon(6, 8, svg`<path d="M5 0L1.500 4 5 8" fill="none" stroke="#3a3f48" stroke-width="1.800"/>`)}</button></h2>
      <button class="row more">Weitere Shapes${icon(6, 10, svg`<path d="M1 1v8l5-4z" fill="#6c717b"/>`)}</button>
      <button class="row">Quick-Shapes</button>
      <button class="row sel">Geschäftsprozess</button>
      <div class="band"></div>
      <h3>Geschäftsprozess</h3>
      <div class="set first">${groupA.map((g) => this.item(g))}</div>
      <hr />
      <button class="wide">${icon(63, 32, svg`<rect x=".5" y=".5" width="62" height="31" fill="#fafafa" stroke="#8e8e8e"/><path d="M2.500 11.500h55l4 4-4 4h-55z" fill="#cfcfcf" stroke="#000"/><path d="M3 13.500h45" stroke="#f4f4f4" stroke-width="3"/><path d="M47 8.500h10" stroke="#000" stroke-dasharray="1 1"/><text x="49" y="18" font-family="Liberation Sans, sans-serif" font-size="7">ET</text>`)}<span>Funktionsb...</span></button>
      <div class="set rest">${groupB.map((g) => this.item(g))}</div>
      <div class="mark">blog</div>`;
  }
}

@customElement("rating-dialog")
class RatingDialog extends LitElement {
  static styles = [uiBase, css`
    :host { display: flex; flex-direction: column; font: 11px/17px "Liberation Sans", Arial, sans-serif; color: #111; background: #dae5f0; border: 1px solid #484c58; border-radius: 7px 7px 0 0; padding: 0 7px 7px; box-sizing: border-box; }
    .bar { display: grid; grid-template-columns: 16px 1fr 32px; align-items: center; height: 31px; margin: 0 -7px; padding: 4px 8px 0 9px; border-radius: 6px 6px 0 0; background: linear-gradient(#c9d8e3 0, #bccfdc 8px, #c3d3e2 16px, #cddbea 31px); }
    h2 { margin: 0; font: 14px/20px "Open Sans", "Noto Sans", sans-serif; text-align: center; color: #1f2c3a; }
    .close { width: 32px; height: 18px; justify-content: center; border: 1px solid #7d8fa5; background: #ccdae8; }
    .tools { display: flex; gap: 2px; height: 63px; padding: 7px 0 0 39px; border-bottom: 3px solid #b5b7ba; border-top: 1px solid #b4bfcc; background: linear-gradient(#f2f4f8 0, #e2e5ec 15px, #cbcbcb 16px, #e3e3e3 100%); }
    .tools button { width: 86px; height: 48px; flex-direction: column; justify-content: flex-start; padding-top: 6px; line-height: 14px; border: 1px solid transparent; }
    .tools .on { border-color: #dcc56c; background: linear-gradient(#fdf5c4 0, #fbe68d 18px, #f8ce42 20px, #fdeb9d 100%); }
    .acts { display: flex; gap: 12px; padding: 14px 12px 18px; background: #ececec; }
    .acts button { width: 135px; height: 23px; justify-content: center; border: 1px solid #acacac; background: #eaeaea; }
    .acts .focus { border-color: #3c8ac0; background: #e9eff3; }
    .acts button:disabled { border-color: #d2d2d2; color: #8d8d8d; }
    .split { display: grid; grid-template-columns: 309px 1fr; gap: 3px; flex: 1; min-height: 0; padding-left: 6px; background: #ececec; }
    .pane { background: #f5f5f5; border: 1px solid #7f8288; border-bottom: 0; }
    .list { border-right: 0; }
    ul { list-style: none; margin: 0; padding: 0 0 0 23px; }
    .root { padding: 0 0 0 13px; }
    li > div { display: flex; align-items: center; height: 18px; white-space: pre; }
    .tw { width: 12px; }
    .leaf { padding-left: 16px; }
    .node { padding: 0 4px; }
    .strong { font-weight: 700; font-size: 12px; border: 1px dotted #c0c0c0; padding: 0 3px; }
    table { border-collapse: collapse; width: 100%; table-layout: fixed; }
    th, td { text-align: left; font-weight: 400; padding: 0 7px; height: 17px; line-height: 17px; }
    th { height: 24px; border-right: 1px solid #ebebeb; border-bottom: 1px solid #e6e6e6; }
    th:last-child { border-right: 0; }
    .c1 { width: 192px; } .c2 { width: 188px; }
  `];
  private twist = html`<span class="tw">${icon(7, 7, svg`<path d="M6.500 0v6.500H0z" fill="#333"/>`)}</span>`;
  render() {
    const leaves = ["F-in-03   ( Status : 0)", "A-07   ( Status : 0)", "Beratungsprozesse   ( Status : 0)"];
    return html`
      <div class="bar">${icon(16, 16, svg`<ellipse cx="8" cy="8" rx="5" ry="6" transform="rotate(35 8 8)" fill="none" stroke="#e27a33" stroke-width="2.600"/>`)}
        <h2>Mitarbeiter-bewertung durchführen</h2>
        <button class="close" aria-label="Schließen">${icon(12, 10, svg`<path d="M2 1l8 8M10 1l-8 8" stroke="#59626e" stroke-width="4"/><path d="M2.500 1.500l7 7M9.500 1.500l-7 7" stroke="#f4f7fa" stroke-width="2"/>`)}</button></div>
      <nav class="tools">${Object.entries(D).map(([k, v]) => html`<button class=${classMap({ on: k === "Dokumente" })}>${icon(24, 24, v)}${k}</button>`)}</nav>
      <div class="acts"><button>Neu</button><button class="focus">Zuordnen</button><button disabled>Bearbeiten</button></div>
      <div class="split">
        <div class="pane"><ul class="root" role="tree"><li role="treeitem" aria-expanded="true"><div>${this.twist}<span class="node strong">Dokumente</span></div>
          <ul role="group"><li role="treeitem" aria-expanded="true"><div>${this.twist}<span class="node">Informationsträger</span></div>
            <ul role="group">${leaves.map((l) => html`<li role="treeitem"><div class="leaf">${l}</div></li>`)}</ul></li></ul></li></ul></div>
        <div class="pane list"><table>
          <thead><tr><th class="c1">Bezeichnung</th><th class="c2">Status</th><th></th></tr></thead>
          <tbody>${["F-in-03", "A-07", "Beratungsprozesse"].map((n) => html`<tr><td>${n}</td><td>0</td><td></td></tr>`)}</tbody>
        </table></div>
      </div>`;
  }
}

@customElement("app-root")
class AppRoot extends LitElement {
  static styles = [uiBase, css`
    :host { display: grid; grid-template-rows: auto 1fr 22px; height: 100vh; font: 11px/16px "Open Sans", "Noto Sans", sans-serif; color: #44474d; background: #b3b7c0; overflow: hidden; }
    .main { display: grid; grid-template-columns: 251px 1fr; gap: 5px; min-height: 0; padding: 3px 5px 0 0; border-left: 0; }
    .work { display: grid; grid-template-columns: 16px 1fr 16px; grid-template-rows: 16px 1fr 18px; min-width: 0; min-height: 0; margin-top: 1px; }
    .corner { background: #f6f6f6; border: 1px solid #8a8d96; border-right-color: #000; border-bottom-color: #000; }
    .corner svg { display: block; }
    .top { grid-column: 2; }
    .canvas { position: relative; overflow: hidden; background: #cbced7; min-width: 0; min-height: 0; }
    .page { position: absolute; left: 66px; top: 111px; width: 1500px; height: 625px; box-shadow: 2px 2px 13px 1px rgba(40, 42, 50, .6); display: block; }
    .page text { font-family: "Liberation Sans", Arial, sans-serif; }
    .dlg { position: absolute; left: 238px; top: 54px; width: 899px; height: 645px; box-shadow: 0 0 4px rgba(0, 0, 0, .25); }
    .vs { grid-column: 3; grid-row: 1 / 3; display: flex; flex-direction: column; background: #dde0e7; }
    .arrow { flex: none; width: 16px; height: 17px; justify-content: center; color: #555a66; }
    .thumb { display: flex; align-items: center; justify-content: center; border: 1px solid #8a92a3; border-radius: 1px; background: linear-gradient(90deg, #f1f3f7, #dde2ea); }
    .vs .s1 { flex: 180; } .vs .thumb { flex: 462; } .vs .s2 { flex: 186; }
    .foot { grid-column: 1 / 4; display: flex; background: #dcdfe6; border-top: 1px solid #9fa3ad; min-width: 0; }
    .foot .arrow { width: 17px; }
    .sheet { width: 52px; padding-left: 7px; background: #f8f8f8; border-left: 1px solid #9a9ea8; font-weight: 700; clip-path: polygon(0 0, 100% 0, 80% 100%, 0 100%); color: #44474d; }
    .hs { flex: 1; display: flex; align-items: center; }
    .hs .track { flex: 1; display: flex; height: 16px; }
    .hs .t1 { flex: 330; } .hs .thumb { flex: 405; background: linear-gradient(#f1f3f7, #dde2ea); } .hs .t2 { flex: 334; }
    .tabs { display: flex; width: 535px; align-items: stretch; }
    .grip { width: 6px; height: 15px; border: 1px solid #8e929c; background: #fafafa; }
    .status { display: flex; align-items: center; background: linear-gradient(#dfe2e7, #c3c7cf 60%, #b4b8c1); border-top: 1px solid #8f939c; padding: 0 8px 2px; color: #41444b; }
    .status > span { white-space: nowrap; }
    .vb { width: 1px; height: 18px; background: #8f939c; margin: 0 9px; }
    .spacer { flex: 1; }
    .view { width: 19px; height: 18px; justify-content: center; background: #fbe07c; border: 1px solid #c2973a; border-radius: 2px; }
    .pct { margin: 0 12px 0 6px; }
    .right { display: flex; align-items: center; }
    .right .vb { margin: 0 5px 0 0; }
    .minus { margin-left: 8px; } .fit { margin: 0 12px 0 8px; } .swap { margin-left: 16px; }
    .zoom { appearance: none; width: 100px; height: 14px; background: linear-gradient(#7d828e, #7d828e) center / 100% 1px no-repeat; }
    .zoom::-webkit-slider-thumb { appearance: none; width: 9px; height: 12px; border: 1px solid #6c7280; background: #f6f7f9; border-radius: 1px 1px 5px 5px; }
  `];
  private tri(dir: "l" | "r" | "u" | "d", bar = false) {
    const d = { l: "M7 1v8L2 5z", r: "M3 1v8l5-4z", u: "M1 7h8L5 2z", d: "M1 3h8L5 8z" }[dir];
    return icon(10, 10, svg`<path d=${d} fill="#4c505b"/>${bar ? svg`<path d=${dir === "l" ? "M.5 1v8" : "M9.500 1v8"} stroke="#4c505b" stroke-width="1.500"/>` : ""}`);
  }
  render() {
    const round = (d: string) => icon(16, 16, svg`<circle cx="8" cy="8" r="7.500" fill="#f1f3f6" stroke="#6c7280"/><path d=${d} stroke="#4c505b" stroke-width="2"/>`);
    return html`
      <office-ribbon></office-ribbon>
      <div class="main">
        <shapes-panel></shapes-panel>
        <div class="work">
          <div class="corner"><svg width="14" height="14" aria-hidden="true"><path d="M7.500 0v14M0 7.500h14" stroke="#3c4fae" stroke-dasharray="1 1"/></svg></div>
          <ruler-strip class="top"></ruler-strip>
          <div class="vs">
            <button class="arrow" aria-label="Nach oben">${this.tri("u")}</button><span class="s1"></span>
            <div class="thumb">${icon(8, 9, svg`<path d="M0 1.500h8M0 3.500h8M0 5.500h8M0 7.500h8" stroke="#7d828e"/>`)}</div><span class="s2"></span>
            <button class="arrow" aria-label="Nach unten">${this.tri("d")}</button>
          </div>
          <ruler-strip vertical></ruler-strip>
          <div class="canvas">
            <svg class="page" viewBox="338 266 1500 625">${drawing}</svg>
            <rating-dialog class="dlg" role="dialog" aria-label="Mitarbeiter-bewertung durchführen"></rating-dialog>
          </div>
          <div class="foot">
            <div class="tabs">
              <button class="arrow" aria-label="Erstes Blatt">${this.tri("l", true)}</button><button class="arrow" aria-label="Vorheriges Blatt">${this.tri("l")}</button>
              <button class="arrow" aria-label="Nächstes Blatt">${this.tri("r")}</button><button class="arrow" aria-label="Letztes Blatt">${this.tri("r", true)}</button>
              <button class="sheet">Blatt-1</button>
              <button aria-label="Neues Blatt">${icon(50, 17, svg`<path d="M0 17L12 0h37L35 16.500H2" fill="#e4e7ed" stroke="#a3a8b4"/><path d="M14.500 5.500h9v8h-6l-3-3z" fill="#dbe8fa" stroke="#3d5a94"/><path d="M12 1l1 2.500L15.500 4 13 5.500 12 8l-1-2.500L8.500 4 11 3.500z" fill="#f2b33c" stroke="#a8762a" stroke-width=".6"/>`)}</button>
            </div>
            <div class="hs">
              <span class="grip"></span><button class="arrow" aria-label="Nach links">${this.tri("l")}</button>
              <div class="track"><span class="t1"></span><div class="thumb">${icon(9, 8, svg`<path d="M1.500 0v8M3.500 0v8M5.500 0v8M7.500 0v8" stroke="#7d828e"/>`)}</div><span class="t2"></span></div>
              <button class="arrow" aria-label="Nach rechts">${this.tri("r")}</button><span class="arrow"></span>
            </div>
          </div>
        </div>
      </div>
      <footer class="status">
        <span>Zeichenbl. 1 von 1</span><i class="vb"></i><span>Deutsch (Deutschland)</span><i class="vb"></i>
        <button aria-label="Makroaufzeichnung">${icon(15, 15, svg`<rect x="1.500" y="2.500" width="13" height="11" fill="#f4f8ff" stroke="#3f65a8"/><path d="M2 3h12v2.500H2z" fill="#4d7cc6"/><path d="M4 8h9M4 10.500h9M6 6v7M10 6v7" stroke="#9db8e2"/><circle cx="3" cy="3" r="2.500" fill="#c6502c"/>`)}</button><i class="vb"></i>
        <span class="spacer"></span>
        <div class="right">
          <i class="vb"></i>
          <button class="view" aria-label="Normalansicht">${icon(13, 12, svg`<path d="M.5 1.500h12v9H.5zM6.500 1v9M7 6h5M2 4h3M2 6h3M2 8h3" fill="#fff" stroke="#4a4a4a"/>`)}</button>
          <button class="pct" aria-label="Vollbild">${icon(12, 12, svg`<path d="M0 1.500h12M1.500 2v4.500h9V2M6 7v3M3 11l3-2 3 2" fill="none" stroke="#44474d" stroke-width="1.300"/>`)}</button>
          <button>79 %</button>
          <button class="minus" aria-label="Verkleinern">${round("M4 8h8")}</button>
          <input class="zoom" type="range" min="0" max="100" value="38" aria-label="Zoom" />
          <button aria-label="Vergrößern">${round("M4 8h8M8 4v8")}</button>
          <button class="fit" aria-label="Seite anpassen">${icon(16, 16, svg`<rect x=".5" y=".5" width="15" height="15" rx="2" fill="#e3e5e9" stroke="#6c7280"/><path d="M8 2v4M8 10v4M2 8h4M10 8h4M3 3l2 2M13 3l-2 2M3 13l2-2M13 13l-2-2" stroke="#33363c" stroke-width="1.400"/>`)}</button>
          <button aria-label="Verschieben">${icon(16, 16, svg`<circle cx="8" cy="8" r="7" fill="#cfe0f5" stroke="#4a5f86"/><path d="M8 2v12M2 8h12" stroke="#2b4f8f" stroke-width="1.500"/><path d="M8 1l-2 3h4zM8 15l-2-3h4zM1 8l3-2v4zM15 8l-3-2v4z" fill="#2b4f8f"/>`)}</button>
          <button class="swap" aria-label="Fenster wechseln">${icon(16, 16, svg`<path d="M6.500 1.500h8v5h-8zM1.500 5.500h5v4h-5zM3.500 10.500h6v4h-6z" fill="#eef2f8" stroke="#4a5f86"/><path d="M7 2h7" stroke="#4a76bd" stroke-width="2"/>`)}</button>
        </div>
      </footer>`;
  }
}
